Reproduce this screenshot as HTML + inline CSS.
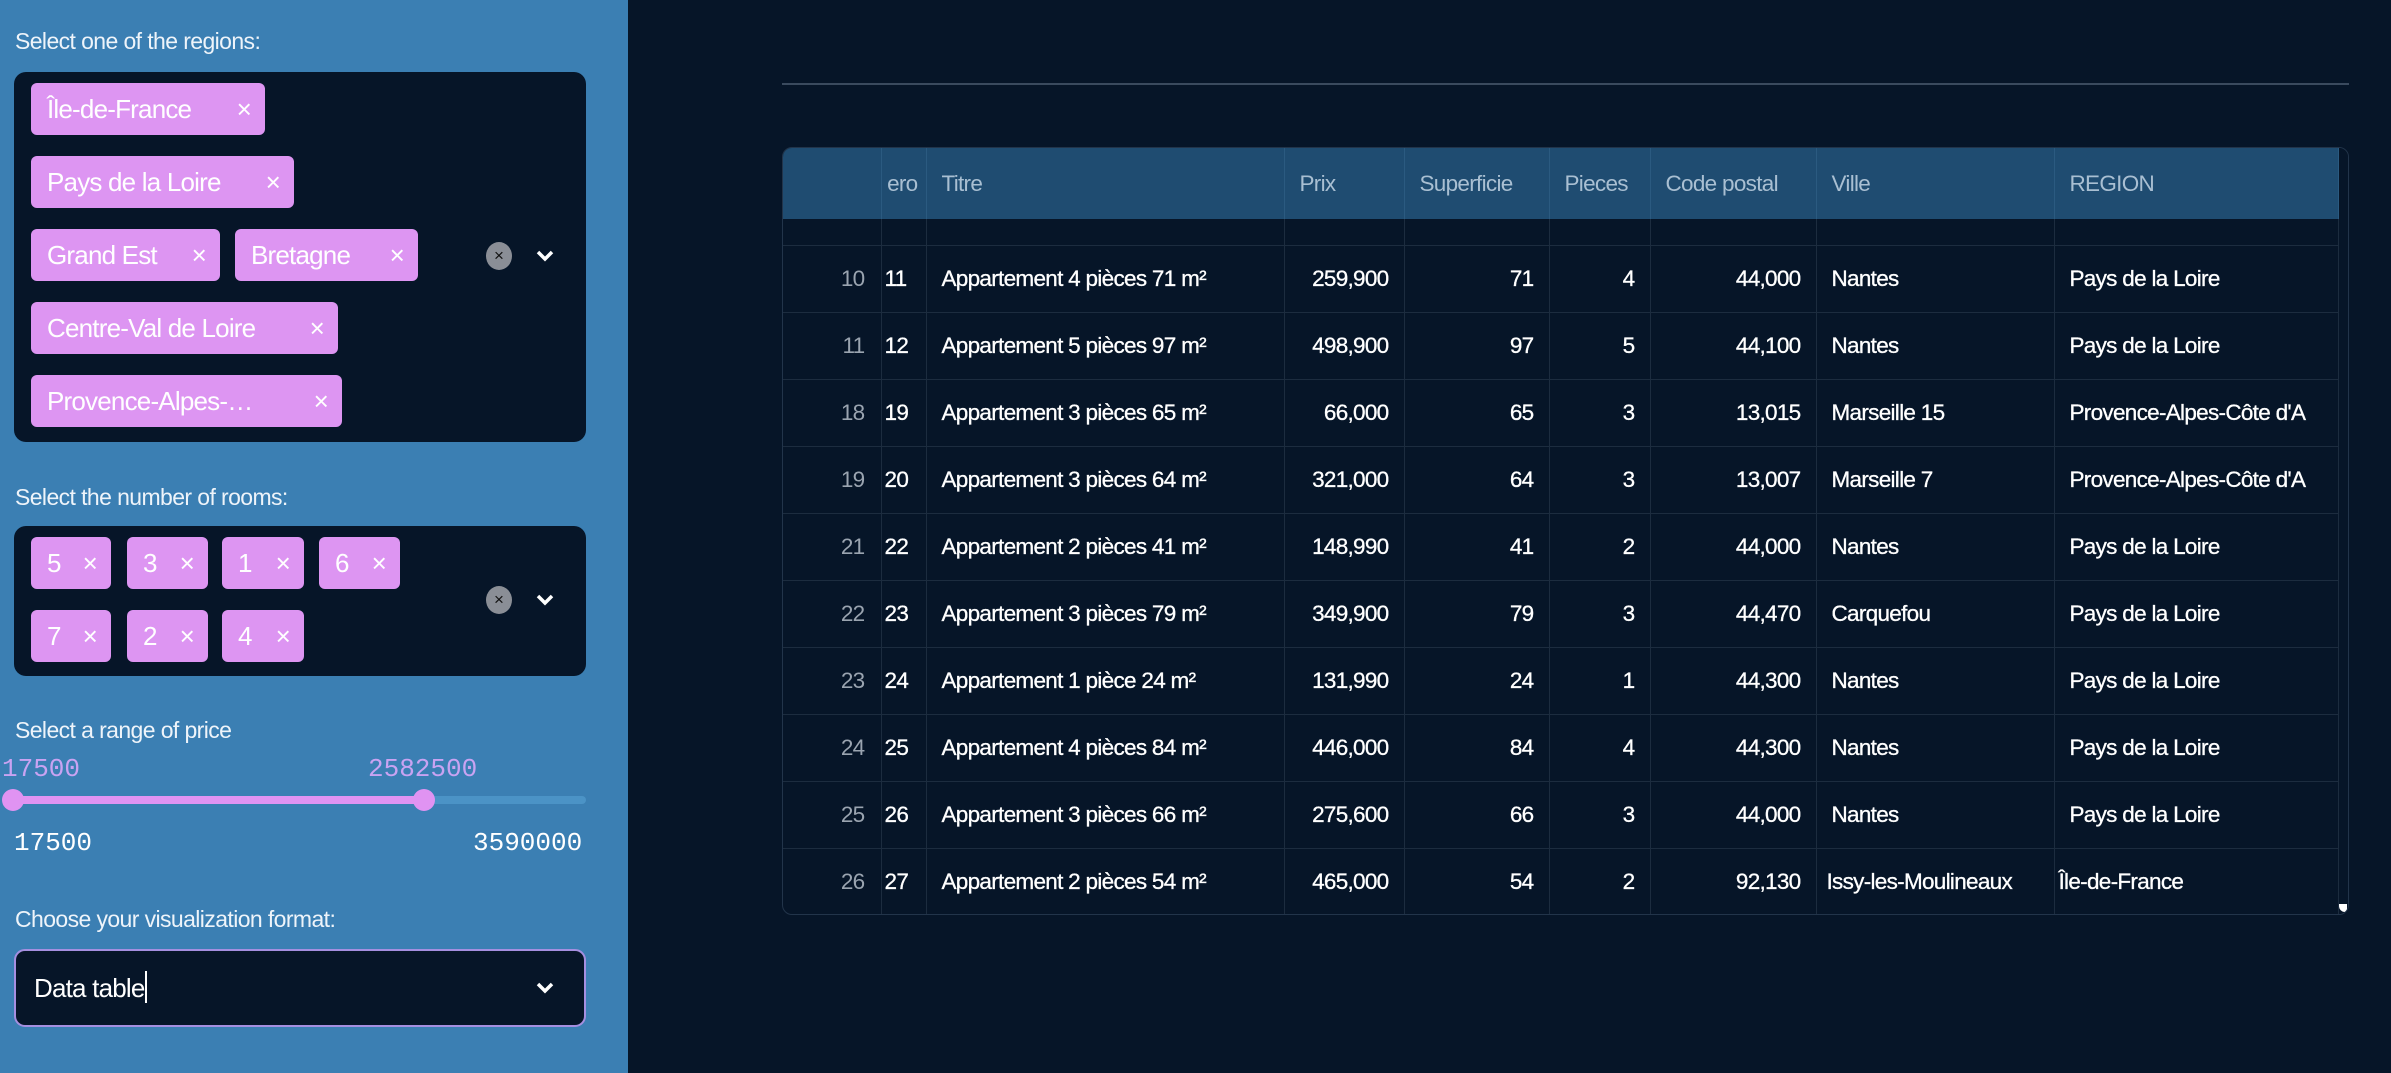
<!DOCTYPE html>
<html><head><meta charset="utf-8">
<style>
*{box-sizing:border-box;margin:0;padding:0}
body{width:2391px;height:1073px;background:#061528;font-family:"Liberation Sans",sans-serif;position:relative;overflow:hidden}
#side{position:absolute;left:0;top:0;width:628px;height:1073px;background:#3b7fb3}
.lbl{position:absolute;left:15px;color:#eef4fa;font-size:23px;letter-spacing:-0.6px}
.box{position:absolute;left:14px;width:572px;background:#061528;border-radius:12px}
.tag{position:absolute;height:52px;background:#dd95f2;border-radius:6px;color:#fff;font-size:26px;letter-spacing:-0.8px;line-height:52px;padding-left:16px;white-space:nowrap}
.tag i{font-style:normal;position:absolute;right:14px;top:0;font-size:26px}
.clr{position:absolute;width:26px;height:28px;border-radius:50%;background:#8a8e96;color:#111;font-size:17px;text-align:center;line-height:28px}
.chev{position:absolute;width:20px;height:14px}
.mono{position:absolute;font-family:"Liberation Mono",monospace;font-size:26px}
#tbl{position:absolute;left:782px;top:147px;width:1567px;height:768px;border:1px solid #22344a;border-radius:10px;overflow:hidden}
table{border-collapse:collapse;table-layout:fixed;position:absolute;left:0;top:0}
td,th{font-size:22.5px;letter-spacing:-0.7px;white-space:nowrap;overflow:hidden;border-right:1px solid #1c2c3f;border-bottom:1px solid #1c2c3f;padding:0 15px;color:#fff}
th{height:71px;background:#1f4c71;color:#a9bfd2;font-weight:normal;text-align:left;border-right:1px solid #2b5a80;border-bottom:none}
td{height:67px;-webkit-text-stroke:0.3px #fff}
td.r{text-align:right}
td.ix{color:#9aa4b0;text-align:right;padding-right:16px;-webkit-text-stroke:0}
td.nm{padding-left:3px}
tr.p td{height:26px}
</style></head><body>
<div id="side">
 <div class="lbl" style="top:28px">Select one of the regions:</div>
 <div class="box" style="top:72px;height:370px"></div>
 <div class="tag" style="left:31px;top:83px;width:234px">Île-de-France<i>×</i></div>
 <div class="tag" style="left:31px;top:156px;width:263px">Pays de la Loire<i>×</i></div>
 <div class="tag" style="left:31px;top:229px;width:189px">Grand Est<i>×</i></div>
 <div class="tag" style="left:235px;top:229px;width:183px">Bretagne<i>×</i></div>
 <div class="tag" style="left:31px;top:302px;width:307px">Centre-Val de Loire<i>×</i></div>
 <div class="tag" style="left:31px;top:375px;width:311px">Provence-Alpes-…<i>×</i></div>
 <div class="clr" style="left:486px;top:242px">×</div>
 <svg class="chev" style="left:535px;top:249px" viewBox="0 0 20 14"><path d="M3 3 L10 10 L17 3" stroke="#fff" stroke-width="3.5" fill="none"/></svg>

 <div class="lbl" style="top:484px">Select the number of rooms:</div>
 <div class="box" style="top:526px;height:150px"></div>
 <div class="tag" style="left:31px;top:537px;width:80px">5<i>×</i></div>
 <div class="tag" style="left:127px;top:537px;width:81px">3<i>×</i></div>
 <div class="tag" style="left:222px;top:537px;width:82px">1<i>×</i></div>
 <div class="tag" style="left:319px;top:537px;width:81px">6<i>×</i></div>
 <div class="tag" style="left:31px;top:610px;width:80px">7<i>×</i></div>
 <div class="tag" style="left:127px;top:610px;width:81px">2<i>×</i></div>
 <div class="tag" style="left:222px;top:610px;width:82px">4<i>×</i></div>
 <div class="clr" style="left:486px;top:586px">×</div>
 <svg class="chev" style="left:535px;top:593px" viewBox="0 0 20 14"><path d="M3 3 L10 10 L17 3" stroke="#fff" stroke-width="3.5" fill="none"/></svg>

 <div class="lbl" style="top:717px">Select a range of price</div>
 <div class="mono" style="left:2px;top:754px;color:#c9a3f2">17500</div>
 <div class="mono" style="left:368px;top:754px;color:#c9a3f2">2582500</div>
 <div style="position:absolute;left:12px;top:796px;width:574px;height:8px;border-radius:4px;background:#4b93c6"></div>
 <div style="position:absolute;left:12px;top:796px;width:412px;height:8px;background:#e093f2"></div>
 <div style="position:absolute;left:2px;top:789px;width:22px;height:22px;border-radius:50%;background:#e093f2"></div>
 <div style="position:absolute;left:413px;top:789px;width:22px;height:22px;border-radius:50%;background:#e093f2"></div>
 <div class="mono" style="left:14px;top:828px;color:#fff">17500</div>
 <div class="mono" style="left:473px;top:828px;color:#fff">3590000</div>

 <div class="lbl" style="top:906px">Choose your visualization format:</div>
 <div style="position:absolute;left:14px;top:949px;width:572px;height:78px;border:2px solid #a58fe0;border-radius:11px;background:#061528"></div>
 <div style="position:absolute;left:34px;top:971px;color:#fff;font-size:26px;letter-spacing:-0.8px">Data table<span style="display:inline-block;width:2px;height:32px;background:#fff;vertical-align:-6px"></span></div>
 <svg class="chev" style="left:535px;top:981px" viewBox="0 0 20 14"><path d="M3 3 L10 10 L17 3" stroke="#fff" stroke-width="3.5" fill="none"/></svg>
</div>

<div style="position:absolute;left:782px;top:83px;width:1567px;height:2px;background:#3a4a5e"></div>

<div id="tbl">
<table>
<colgroup><col style="width:98px"><col style="width:45px"><col style="width:358px"><col style="width:120px"><col style="width:145px"><col style="width:101px"><col style="width:166px"><col style="width:238px"><col style="width:284px"></colgroup>
<tr><th></th><th style="padding:0;text-align:right;padding-right:8px">ero</th><th>Titre</th><th>Prix</th><th>Superficie</th><th>Pieces</th><th>Code postal</th><th>Ville</th><th>REGION</th></tr>
<tr class="p"><td></td><td></td><td></td><td></td><td></td><td></td><td></td><td></td><td></td></tr>
<tr><td class="ix">10</td><td class="nm">11</td><td>Appartement 4 pièces 71 m²</td><td class="r">259,900</td><td class="r">71</td><td class="r">4</td><td class="r">44,000</td><td>Nantes</td><td>Pays de la Loire</td></tr>
<tr><td class="ix">11</td><td class="nm">12</td><td>Appartement 5 pièces 97 m²</td><td class="r">498,900</td><td class="r">97</td><td class="r">5</td><td class="r">44,100</td><td>Nantes</td><td>Pays de la Loire</td></tr>
<tr><td class="ix">18</td><td class="nm">19</td><td>Appartement 3 pièces 65 m²</td><td class="r">66,000</td><td class="r">65</td><td class="r">3</td><td class="r">13,015</td><td>Marseille 15</td><td>Provence-Alpes-Côte d'A</td></tr>
<tr><td class="ix">19</td><td class="nm">20</td><td>Appartement 3 pièces 64 m²</td><td class="r">321,000</td><td class="r">64</td><td class="r">3</td><td class="r">13,007</td><td>Marseille 7</td><td>Provence-Alpes-Côte d'A</td></tr>
<tr><td class="ix">21</td><td class="nm">22</td><td>Appartement 2 pièces 41 m²</td><td class="r">148,990</td><td class="r">41</td><td class="r">2</td><td class="r">44,000</td><td>Nantes</td><td>Pays de la Loire</td></tr>
<tr><td class="ix">22</td><td class="nm">23</td><td>Appartement 3 pièces 79 m²</td><td class="r">349,900</td><td class="r">79</td><td class="r">3</td><td class="r">44,470</td><td>Carquefou</td><td>Pays de la Loire</td></tr>
<tr><td class="ix">23</td><td class="nm">24</td><td>Appartement 1 pièce 24 m²</td><td class="r">131,990</td><td class="r">24</td><td class="r">1</td><td class="r">44,300</td><td>Nantes</td><td>Pays de la Loire</td></tr>
<tr><td class="ix">24</td><td class="nm">25</td><td>Appartement 4 pièces 84 m²</td><td class="r">446,000</td><td class="r">84</td><td class="r">4</td><td class="r">44,300</td><td>Nantes</td><td>Pays de la Loire</td></tr>
<tr><td class="ix">25</td><td class="nm">26</td><td>Appartement 3 pièces 66 m²</td><td class="r">275,600</td><td class="r">66</td><td class="r">3</td><td class="r">44,000</td><td>Nantes</td><td>Pays de la Loire</td></tr>
<tr><td class="ix">26</td><td class="nm">27</td><td>Appartement 2 pièces 54 m²</td><td class="r">465,000</td><td class="r">54</td><td class="r">2</td><td class="r">92,130</td><td style="padding-left:10px">Issy-les-Moulineaux</td><td style="padding-left:4px">Île-de-France</td></tr>
</table>
<div style="position:absolute;left:1556px;top:0;width:11px;height:768px;background:#061528"></div>
<div style="position:absolute;left:1556px;top:756px;width:8px;height:8px;background:#fff;border-radius:0 0 0 6px"></div>
</div>
</body></html>
